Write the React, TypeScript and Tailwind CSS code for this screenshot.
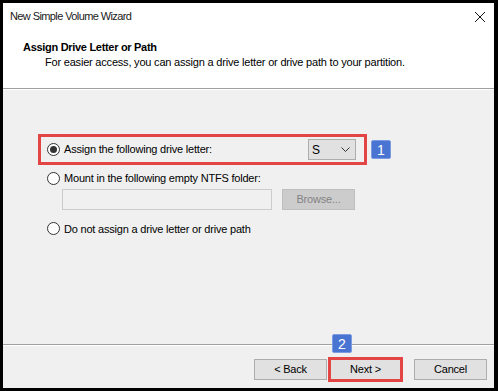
import React from 'react'

const font = { fontFamily: '"Liberation Sans", Arial, sans-serif' }

function Radio({ checked }: { checked?: boolean }) {
  return (
    <span className="flex h-[13px] w-[13px] shrink-0 items-center justify-center rounded-full border border-[#333333] bg-white">
      {checked && <span className="h-[7px] w-[7px] rounded-full bg-[#333333]" />}
    </span>
  )
}

function Badge({ n }: { n: string }) {
  return (
    <span className="flex h-[19px] w-[20px] items-center justify-center rounded-[2px] border border-[#7d9be0] bg-[#4a74d2] text-[14px] leading-none tracking-normal text-white">
      {n}
    </span>
  )
}

export default function App() {
  return (
    <div
      className="h-[391px] w-[498px] bg-black pb-[3px] pl-[3px] pr-[4px] pt-[3px] text-[11px] tracking-[-0.2px] text-black"
      style={font}
    >
      <div className="flex h-full w-full flex-col bg-[#f0f0f0]">
        {/* title bar */}
        <div className="flex h-[27px] items-center justify-between bg-white pl-[7px] pr-[6px]">
          <span className="text-[#1a1a1a] tracking-[-0.6px]">New Simple Volume Wizard</span>
          <svg width="12" height="12" viewBox="0 0 12 12" className="mr-[2px]">
            <path d="M1 1 L11 11 M11 1 L1 11" stroke="#111" strokeWidth="1" />
          </svg>
        </div>

        {/* header */}
        <div className="flex h-[58px] flex-col bg-white pl-[20px] pt-[10px]">
          <span className="font-bold leading-[15px] tracking-[-0.3px]">Assign Drive Letter or Path</span>
          <span className="pl-[22px] leading-[15px]">
            For easier access, you can assign a drive letter or drive path to your partition.
          </span>
        </div>
        <div className="h-px bg-[#a0a0a0]" />
        <div className="h-px bg-white" />

        {/* body */}
        <div className="flex flex-1 flex-col pl-[35px] pt-[44px]">
          <div className="flex items-center gap-[4px]">
            <div className="flex h-[31px] w-[329px] items-center border-[3px] border-[#e34444] pl-[6px] pr-[8px]">
              <Radio checked />
              <span className="ml-[4px] flex-1">Assign the following drive letter:</span>
              <div className="flex h-[21px] w-[48px] items-center justify-between border border-[#adadad] bg-[#e1e1e1] pl-[3px] pr-[5px]">
                <span className="text-[12px]">S</span>
                <svg width="9" height="5" viewBox="0 0 9 5">
                  <path d="M0.5 0.5 L4.5 4.5 L8.5 0.5" stroke="#333" fill="none" strokeWidth="1" />
                </svg>
              </div>
            </div>
            <Badge n="1" />
          </div>

          <div className="ml-[9px] mt-[5px] flex items-center">
            <Radio />
            <span className="ml-[4px]">Mount in the following empty NTFS folder:</span>
          </div>
          <div className="ml-[24px] mt-[2px] flex items-center gap-[10px]">
            <div className="h-[21px] w-[210px] border border-[#cccccc] bg-[#f0f0f0]" />
            <div className="flex h-[21px] w-[73px] items-center justify-center border border-[#bfbfbf] bg-[#cccccc] text-[#838383]">
              Browse...
            </div>
          </div>
          <div className="ml-[9px] mt-[11px] flex items-center">
            <Radio />
            <span className="ml-[4px]">Do not assign a drive letter or drive path</span>
          </div>
        </div>

        {/* footer */}
        <div className="relative">
          <div className="h-px bg-[#a0a0a0]" />
          <div className="h-px bg-white" />
          <div className="absolute left-[329px] top-[-10px]">
            <Badge n="2" />
          </div>
          <div className="flex h-[42px] items-start pl-[251px] pt-[11px]">
            <div className="mt-[2px] flex h-[21px] w-[73px] items-center justify-center border border-[#adadad] bg-[#e1e1e1]">
              &lt; Back
            </div>
            <div className="ml-[1px] flex h-[25px] w-[75px] items-center justify-center border-[3px] border-[#e34444] bg-[#e1e1e1]">
              Next &gt;
            </div>
            <div className="ml-[11px] mt-[2px] flex h-[21px] w-[73px] items-center justify-center border border-[#adadad] bg-[#e1e1e1]">
              Cancel
            </div>
          </div>
        </div>
      </div>
    </div>
  )
}
